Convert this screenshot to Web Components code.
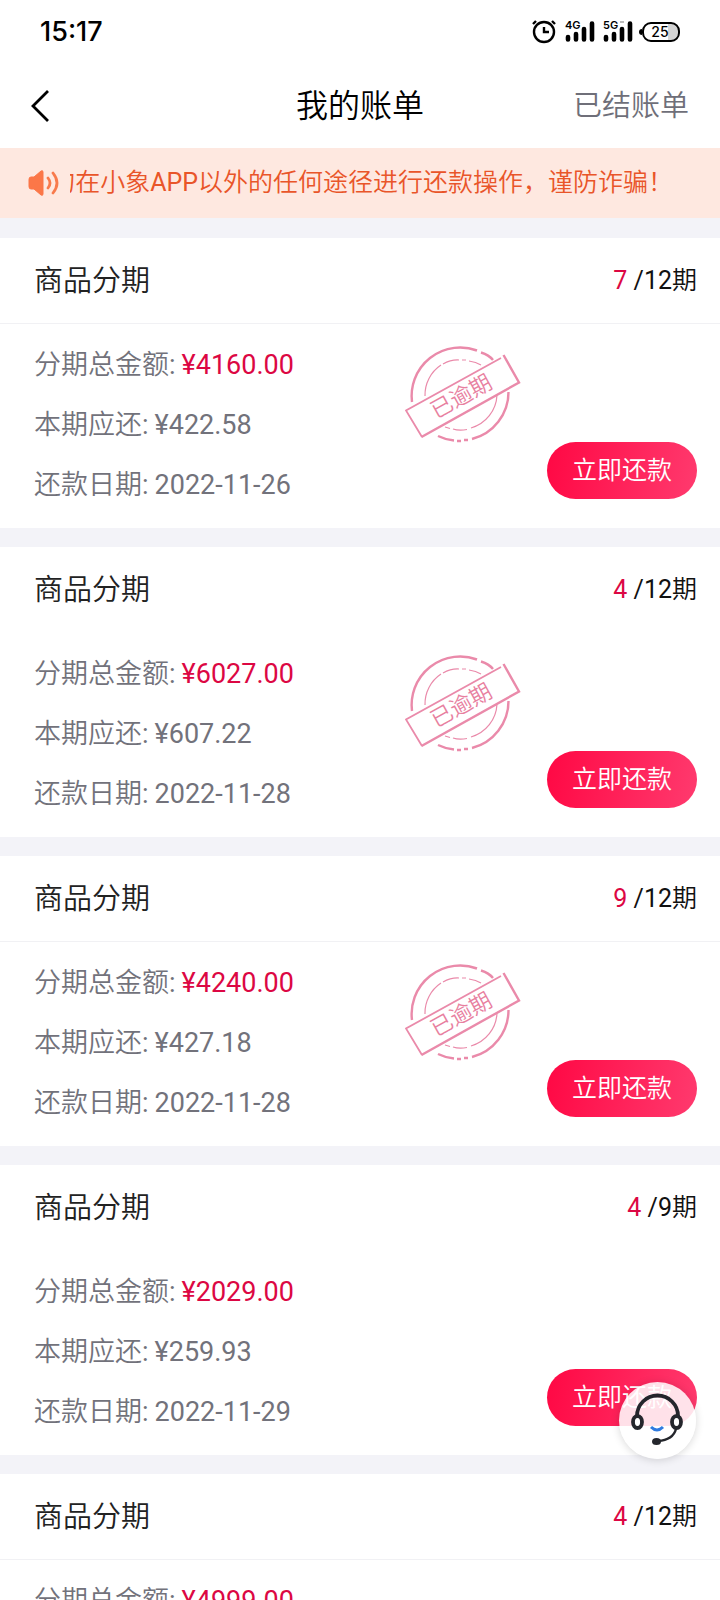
<!DOCTYPE html>
<html lang="zh-CN">
<head>
<meta charset="UTF-8">
<meta name="viewport" content="width=device-width, initial-scale=1">
<title>我的账单</title>
<style>
    body {
        margin: 0;
        background: #f3f3f8;
        font-family: Roboto, "Noto Sans CJK SC DemiLight", "Noto Sans CJK SC", sans-serif;
        color: #222;
    }
</style>
</head>
<body>
<bill-page></bill-page>

<script>
const bills = [
    { current: 7, periods: 12, total: '4160.00', due: '422.58', date: '2022-11-26', overdue: true, line: true },
    { current: 4, periods: 12, total: '6027.00', due: '607.22', date: '2022-11-28', overdue: true },
    { current: 9, periods: 12, total: '4240.00', due: '427.18', date: '2022-11-28', overdue: true, line: true },
    { current: 4, periods: 9, total: '2029.00', due: '259.93', date: '2022-11-29' },
    { current: 4, periods: 12, total: '4999.00', due: '503.64', date: '2022-11-30', line: true }
];

class StatusBar extends HTMLElement {
    constructor() {
        super();
        this.attachShadow({ mode: 'open' });
    }

    connectedCallback() {
        this.shadowRoot.innerHTML = `
            <style>
                :host {
                    display: flex;
                    align-items: center;
                    justify-content: space-between;
                    height: 64px;
                    padding: 0 40px;
                    background: #fff;
                    color: #000;
                }
                time { font: 500 27px/32px Inter, sans-serif; }
                .icons { display: flex; align-items: center; gap: 8px; }
                svg { display: block; overflow: visible; }
            </style>
            <time>15:17</time>
            <div class="icons">
                <svg width="24" height="24" viewBox="0 0 24 24" fill="none" stroke="#000" stroke-width="2.4">
                    <circle cx="12" cy="12" r="10"/>
                    <path d="M12 7v5h5M1 4l3-3M20 1l3 3"/>
                </svg>
                <svg width="30" height="24" viewBox="0 0 30 24">
                    <g stroke="#000" stroke-width="4.600" stroke-linecap="round"><path d="M4 17v2.500M12 14v5.500M20 9v10.500M28 3.500v16"/></g>
                    <text x="1" y="9" font-family="Inter, sans-serif" font-size="11" font-weight="600">4G</text>
                </svg>
                <svg width="30" height="24" viewBox="0 0 30 24">
                    <path d="M18 2h4" stroke="#bbb" stroke-width="2"/>
                    <g stroke="#000" stroke-width="4.600" stroke-linecap="round"><path d="M4 17v2.500M12 14v5.500M20 9v10.500M28 3.500v16"/></g>
                    <text x="1" y="9" font-family="Inter, sans-serif" font-size="11" font-weight="600">5G</text>
                </svg>
                <svg width="40" height="22" viewBox="0 0 40 22">
                    <path d="M28 2h3a7 7 0 0 1 7 7v4a7 7 0 0 1-7 7h-3z" fill="#d4d4d4"/>
                    <rect x="3" y="2" width="36" height="18" rx="8" fill="none" stroke="#000" stroke-width="2"/>
                    <path d="M2 8v6a3 3 0 0 1 0-6z"/>
                    <text x="20" y="16" text-anchor="middle" font-family="Inter, sans-serif" font-size="14" font-weight="500">25</text>
                </svg>
            </div>
        `;
    }
}

class NavBar extends HTMLElement {
    constructor() {
        super();
        this.attachShadow({ mode: 'open' });
        this.shadowRoot.innerHTML = `
            <style>
                :host {
                    display: grid;
                    grid-template-columns: 1fr auto 1fr;
                    align-items: center;
                    height: 84px;
                    padding: 0 31px;
                    background: #fff;
                }
                button {
                    justify-self: start;
                    display: flex;
                    border: 0;
                    padding: 8px 8px 8px 0;
                    background: none;
                }
                h1 { margin: 0; font-size: 32px; line-height: 40px; font-weight: inherit; color: #000; }
                a {
                    justify-self: end;
                    font-size: 29px;
                    line-height: 40px;
                    color: #6f6f79;
                    text-decoration: none;
                }
            </style>
            <button type="button" aria-label="返回">
                <svg width="20" height="32" viewBox="0 0 20 32" fill="none" stroke="#000" stroke-width="2.800">
                    <path d="M17 1L2 16l15 15"/>
                </svg>
            </button>
            <h1><slot></slot></h1>
            <a href="#settled"><slot name="action"></slot></a>
        `;
    }
}

class NoticeBar extends HTMLElement {
    constructor() {
        super();
        this.attachShadow({ mode: 'open' });
        this.shadowRoot.innerHTML = `
            <style>
                :host {
                    display: flex;
                    align-items: center;
                    gap: 10px;
                    height: 70px;
                    padding: 0 28px;
                    background: #fee8e0;
                    color: #e95529;
                    font-size: 25px;
                    line-height: 36px;
                }
                svg { flex: none; }
                .track {
                    flex: 1;
                    display: flex;
                    overflow: hidden;
                    justify-content: flex-end;
                    padding-right: 19px;
                    white-space: nowrap;
                }
            </style>
            <svg width="32" height="28" viewBox="0 0 32 28" fill="none" stroke="#f87a4c" stroke-width="2.800" stroke-linecap="round">
                <path d="M1 10Q1 8 3 8h3l7-6q2-1 2 1v22q0 2-2 1l-7-6H3q-2 0-2-2z" fill="#fb7748" stroke="#fb7748" stroke-width="1"/>
                <path d="M20 9q4 5 0 10M25 4q8 10 0 20"/>
            </svg>
            <div class="track"><slot></slot></div>
        `;
    }
}

class OverdueStamp extends HTMLElement {
    constructor() {
        super();
        this.attachShadow({ mode: 'open' });
        this.shadowRoot.innerHTML = `
            <style>
                :host { display: block; width: 120px; }
                svg { display: block; width: 100%; }
                text { font-size: 22px; fill: #e8809f; }
            </style>
            <svg viewBox="0 0 120 100" fill="none" stroke="#ea8aaa">
                <path d="M7 57A48.500 48.500 0 0 1 72 5.500M76 7.500Q84 10 88 15M103.500 47A48.500 48.500 0 0 1 67 94M63 95h-4M56 96h-4M49 95.500Q40 94.500 33 91" stroke-width="2.400"/>
                <path d="M20 51A36 36 0 0 1 36 20M38 19Q46 14.500 54 15M57 15h4M64 16Q71 17 76 20M92 50A36 36 0 0 1 66 83M62 84.500Q54 86 48 84M45 83.500l-5-1.500" stroke-width="1.200"/>
                <path d="M100 11L1 65.500l16 26.500L115 38 98.500 10" fill="#fff" stroke="none"/>
                <path d="M96 13L1 65.500 17 92" stroke-width="1.800"/>
                <path d="M16.500 92L114 37.500 98.500 10" stroke-width="2.400"/>
                <text x="0" y="8" text-anchor="middle" stroke="none" transform="translate(56 51) rotate(-29)">已逾期</text>
            </svg>
        `;
    }
}

class BillCard extends HTMLElement {
    constructor() {
        super();
        this.attachShadow({ mode: 'open' });
    }

    set bill(data) {
        this.render(data);
    }

    render(data) {
        this.shadowRoot.innerHTML = `
            <style>
                :host { display: block; background: #fff; }
                header {
                    display: flex;
                    align-items: center;
                    justify-content: space-between;
                    height: 85px;
                    padding: 0 23px 0 34px;
                    border-bottom: 1px solid ${data.line ? '#f1f1f4' : '#fff'};
                }
                h2 { margin: 0; font-size: 29px; line-height: 40px; font-weight: inherit; color: #222; }
                .count { font-size: 25px; line-height: 40px; color: #111; }
                .count b { font-weight: inherit; color: #dc0743; }
                .body { display: flex; gap: 22px; padding: 11px 23px 13px 34px; }
                dl { flex: 1; margin: 0; font-size: 27px; line-height: 60px; color: #72727b; }
                dl div { display: flex; gap: 6px; white-space: nowrap; }
                dd { margin: 0; }
                .total { color: #dc0743; }
                overdue-stamp { margin-top: 10px; }
                button {
                    align-self: flex-end;
                    width: 150px;
                    height: 57px;
                    margin-bottom: 16px;
                    padding: 0 0 6px;
                    border: 0;
                    border-radius: 29px;
                    background: linear-gradient(100deg, #ff0844, #ff3a6e);
                    color: #fff;
                    font: inherit;
                    font-size: 25px;
                }
            </style>
            <header>
                <h2>商品分期</h2>
                <span class="count"><b>${data.current}</b> /${data.periods}期</span>
            </header>
            <div class="body">
                <dl>
                    <div><dt>分期总金额:</dt><dd class="total">¥${data.total}</dd></div>
                    <div><dt>本期应还:</dt><dd>¥${data.due}</dd></div>
                    <div><dt>还款日期:</dt><dd>${data.date}</dd></div>
                </dl>
                ${data.overdue ? '<overdue-stamp></overdue-stamp>' : ''}
                <button type="button">立即还款</button>
            </div>
        `;
    }
}

class ServiceButton extends HTMLElement {
    constructor() {
        super();
        this.attachShadow({ mode: 'open' });
        this.shadowRoot.innerHTML = `
            <style>
                :host { position: fixed; right: 24px; bottom: 141px; }
                button {
                    display: block;
                    width: 77px;
                    height: 77px;
                    padding: 0;
                    border: 0;
                    border-radius: 50%;
                    background: rgba(255, 255, 255, 0.86);
                    box-shadow: 0 1px 8px rgba(0, 0, 0, 0.16);
                }
                svg { display: block; }
            </style>
            <button type="button" aria-label="在线客服">
                <svg width="77" height="77" viewBox="0 0 77 77" fill="none" stroke="#24262c" stroke-width="3.800">
                    <path d="M18 34a20.500 20.500 0 0 1 41 0"/>
                    <ellipse cx="18.500" cy="40" rx="4.500" ry="6" fill="#fff"/>
                    <ellipse cx="57.500" cy="40" rx="4.500" ry="6" fill="#fff"/>
                    <path d="M57 47q-3 11-18 12" stroke-width="2.400"/>
                    <ellipse cx="37.500" cy="59.500" rx="4.500" ry="3.500" fill="#24262c" stroke="none"/>
                    <path d="M32 45q6 6 12 0" stroke="#2f7be0" stroke-width="3"/>
                </svg>
            </button>
        `;
    }
}

class BillPage extends HTMLElement {
    constructor() {
        super();
        this.attachShadow({ mode: 'open' });
    }

    connectedCallback() {
        this.shadowRoot.innerHTML = `
            <style>
                :host { display: block; height: 100vh; overflow: hidden; }
                main { display: flex; flex-direction: column; gap: 19px; padding-top: 20px; }
            </style>
            <status-bar></status-bar>
            <nav-bar>我的账单<span slot="action">已结账单</span></nav-bar>
            <notice-bar>请勿在小象APP以外的任何途径进行还款操作，谨防诈骗！</notice-bar>
            <main></main>
            <service-button></service-button>
        `;
        const list = this.shadowRoot.querySelector('main');
        bills.forEach((data) => {
            const card = document.createElement('bill-card');
            card.bill = data;
            list.append(card);
        });
    }
}

customElements.define('status-bar', StatusBar);
customElements.define('nav-bar', NavBar);
customElements.define('notice-bar', NoticeBar);
customElements.define('overdue-stamp', OverdueStamp);
customElements.define('bill-card', BillCard);
customElements.define('service-button', ServiceButton);
customElements.define('bill-page', BillPage);
</script>
</body>
</html>
